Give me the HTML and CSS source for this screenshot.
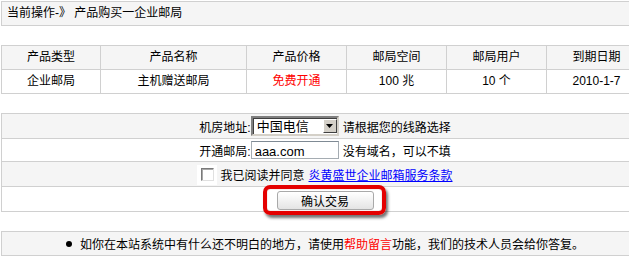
FILE: index.html
```html
<!DOCTYPE html>
<html lang="zh-CN">
<head>
    <meta charset="UTF-8">
    <title>产品购买一企业邮局</title>
    <link rel="stylesheet" href="styles.css">
</head>
<body>
    <div class="crumb">当前操作-》 产品购买一企业邮局</div>

    <div class="product-table">
        <div class="cell head">产品类型</div>
        <div class="cell head">产品名称</div>
        <div class="cell head">产品价格</div>
        <div class="cell head">邮局空间</div>
        <div class="cell head">邮局用户</div>
        <div class="cell head">到期日期</div>
        <div class="cell">企业邮局</div>
        <div class="cell">主机赠送邮局</div>
        <div class="cell free">免费开通</div>
        <div class="cell">100 兆</div>
        <div class="cell">10 个</div>
        <div class="cell">2010-1-7</div>
    </div>

    <form class="buy-form">
        <div class="row gray tall">
            <label for="room">机房地址:</label><span class="select">
                <select id="room">
                    <option>中国电信</option>
                    <option>中国网通</option>
                </select>
                <span class="arrow"><svg width="7" height="4" viewBox="0 0 7 4"><path d="M0 0h7L3.5 4z" fill="#000"/></svg></span>
            </span>
            <span class="hint">请根据您的线路选择</span>
        </div>
        <div class="row">
            <label for="domain">开通邮局:</label><input type="text" id="domain" value="aaa.com">
            <span class="hint">没有域名，可以不填</span>
        </div>
        <div class="row gray tall">
            <span class="check-wrap"><input type="checkbox" id="agree"></span>
            <label for="agree" class="agree">我已阅读并同意</label>
            <a href="#" class="terms">炎黄盛世企业邮箱服务条款</a>
        </div>
        <div class="row tall">
            <span class="btn-wrap">
                <button type="submit" class="btn-confirm">确认交易</button>
                <span class="mark"></span>
            </span>
        </div>
    </form>

    <div class="notice">
        <span class="dot"></span>如你在本站系统中有什么还不明白的地方，请使用<a href="#" class="help">帮助留言</a>功能，我们的技术人员会给你答复。
    </div>
</body>
</html>
```

FILE: styles.css
```css
body {
    margin: 1px;
    font-family: "Liberation Sans", "Noto Sans CJK SC", sans-serif;
    font-size: 12px;
    color: #000;
    background: #fff;
    width: 648px;
}

.crumb {
    height: 23px;
    line-height: 23px;
    padding-left: 5px;
    border: 1px solid #d0d0d0;
    background-color: #f5f5f5;
}

.product-table {
    margin-top: 19px;
    display: grid;
    grid-template-columns: 99px 146px 100px 100px 100px 100px;
    border-top: 1px solid #d0d0d0;
    border-left: 1px solid #d0d0d0;
}

.cell {
    height: 23px;
    line-height: 23px;
    text-align: center;
    border-right: 1px solid #d0d0d0;
    border-bottom: 1px solid #d0d0d0;
}

.cell.head {
    background-color: #f5f5f5;
}

.cell.free {
    color: #f00;
}

.buy-form {
    margin: 19px 0 0;
    border: 1px solid #d0d0d0;
    border-bottom: none;
}

.row {
    height: 22px;
    display: flex;
    justify-content: center;
    align-items: center;
    border-bottom: 1px solid #d0d0d0;
}

.row.tall {
    height: 24px;
}

.row.gray {
    background-color: #f5f5f5;
}

.select {
    position: relative;
    display: inline-flex;
    width: 84px;
    height: 16px;
    border: 2px solid;
    border-color: #808080 #d4d0c8 #d4d0c8 #808080;
    box-shadow: inset 1px 1px 0 #404040;
    background: #fff;
}

.select select {
    appearance: none;
    -webkit-appearance: none;
    border: none;
    outline: none;
    background: transparent;
    flex: 1;
    min-width: 0;
    padding: 0 0 0 3px;
    margin: 1px 0 0 1px;
    font: inherit;
    font-size: 13px;
    color: #000;
}

.arrow {
    width: 14px;
    height: 14px;
    margin-top: 1px;
    display: flex;
    align-items: center;
    justify-content: center;
    background: #d4d0c8;
    border: 1px solid;
    border-color: #fff #404040 #404040 #fff;
    box-sizing: border-box;
}

input[type="text"] {
    width: 88px;
    height: 18px;
    box-sizing: border-box;
    border: 1px solid #a5acb2;
    border-top-color: #7f8a94;
    padding: 2px 0 0 3px;
    font: inherit;
    font-size: 13px;
    color: #000;
}

.hint {
    margin-left: 4px;
}

.check-wrap {
    width: 20px;
    height: 20px;
    display: inline-flex;
    align-items: center;
    justify-content: center;
    background: #fff;
    margin-top: 1px;
}

.check-wrap input {
    appearance: none;
    -webkit-appearance: none;
    margin: 0;
    width: 13px;
    height: 13px;
    background: #fff;
    border: 1px solid;
    border-color: #7a7a7a #e0e0e0 #e0e0e0 #7a7a7a;
    box-shadow: inset 1px 1px 0 #a8a8a8;
}

.agree {
    margin-left: 3px;
}

.terms {
    margin-left: 4px;
    color: #0000ff;
    text-decoration: underline;
}

.btn-wrap {
    position: relative;
    display: inline-block;
    margin-top: 2px;
}

.btn-confirm {
    display: block;
    width: 97px;
    height: 19px;
    padding: 0;
    font: inherit;
    color: #000;
    border: 1px solid #a9a9a9;
    border-radius: 3px;
    background: linear-gradient(#ffffff, #f2f2f2 50%, #e4e4e4);
    cursor: pointer;
}

/* red highlight drawn over the button */
.mark {
    position: absolute;
    left: -14px;
    top: -6px;
    width: 115px;
    height: 22px;
    border: 4px solid #e40000;
    border-radius: 7px;
    box-shadow: 2px 3px 3px rgba(0, 0, 0, 0.55), inset 0 0 1px rgba(120, 0, 0, 0.6);
    pointer-events: none;
}

.notice {
    margin-top: 19px;
    height: 23px;
    display: flex;
    align-items: center;
    justify-content: center;
    border: 1px solid #d0d0d0;
    background-color: #f5f5f5;
}

.dot {
    width: 6px;
    height: 6px;
    border-radius: 50%;
    background: #000;
    margin-right: 8px;
}

.help {
    color: #f00;
    text-decoration: none;
}
```
